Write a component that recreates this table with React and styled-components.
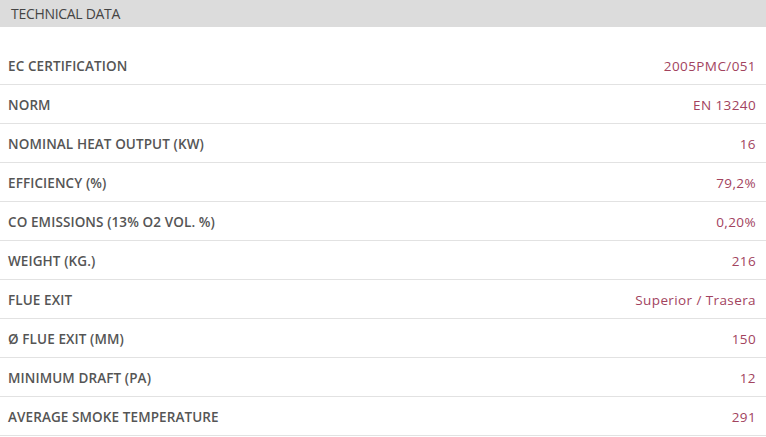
import React from 'react';
import styled, { createGlobalStyle } from 'styled-components';

const GlobalStyle = createGlobalStyle`
  body {
    margin: 0;
    background: #fff;
    font-family: "Open Sans", "Liberation Sans", sans-serif;
  }
`;

const Wrapper = styled.div`
  width: 766px;
`;

const Header = styled.div`
  height: 27px;
  display: flex;
  align-items: center;
  padding: 0 11px;
  background-color: #dcdcdc;
  color: #444;
  font-size: 14px;
  letter-spacing: -0.3px;
`;

const Table = styled.div`
  margin-top: 19px;
`;

const Row = styled.div`
  box-sizing: border-box;
  height: 39px;
  display: flex;
  justify-content: space-between;
  align-items: center;
  padding: 1px 10px 0 8px;
  border-bottom: 1px solid #e2e2e2;
`;

const Label = styled.span`
  color: #555;
  font-size: 13.5px;
  font-weight: 600;
  letter-spacing: 0.1px;
`;

const Value = styled.span`
  color: #a2435e;
  font-size: 13.5px;
  letter-spacing: 0.4px;
`;

const data = [
  ['EC CERTIFICATION', '2005PMC/051'],
  ['NORM', 'EN 13240'],
  ['NOMINAL HEAT OUTPUT (KW)', '16'],
  ['EFFICIENCY (%)', '79,2%'],
  ['CO EMISSIONS (13% O2 VOL. %)', '0,20%'],
  ['WEIGHT (KG.)', '216'],
  ['FLUE EXIT', 'Superior / Trasera'],
  ['Ø FLUE EXIT (MM)', '150'],
  ['MINIMUM DRAFT (PA)', '12'],
  ['AVERAGE SMOKE TEMPERATURE', '291'],
];

const App = () => {
  return (
    <Wrapper>
      <GlobalStyle />
      <Header>TECHNICAL DATA</Header>
      <Table>
        {data.map(([label, value]) => (
          <Row key={label}>
            <Label>{label}</Label>
            <Value>{value}</Value>
          </Row>
        ))}
      </Table>
    </Wrapper>
  );
};

export default App;
